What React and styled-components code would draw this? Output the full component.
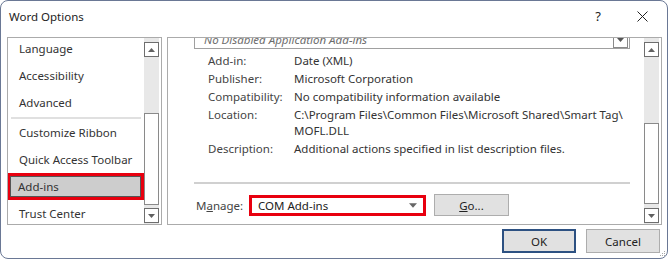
import React from "react";
import styled, { createGlobalStyle } from "styled-components";

const Global = createGlobalStyle`
  html, body { margin: 0; padding: 0; background: #ffffff; }
  body { font-family: "Noto Sans", "Open Sans", "DejaVu Sans", sans-serif; }
  * { box-sizing: border-box; }
`;

const Window = styled.div`
  position: relative;
  width: 668px;
  height: 259px;
  border: 1px solid #6a7895;
  border-radius: 8px;
  background: #ffffff;
  display: flex;
  flex-direction: column;
  overflow: hidden;
  color: #333333;
  font-size: 11.5px;
`;

const TitleBar = styled.div`
  height: 36px;
  display: flex;
  align-items: center;
  padding: 0 3px 6px 8px;
`;

const Title = styled.div`
  flex: 1;
  font-size: 11.5px;
  color: #222222;
`;

const CaptionButton = styled.div`
  width: 44px;
  height: 24px;
  display: flex;
  align-items: center;
  justify-content: center;
  font-size: 13px;
  color: #222222;
`;

const Body = styled.div`
  height: 188px;
  display: flex;
  gap: 5px;
  padding: 0 5px 0 6px;
`;

const Panel = styled.div`
  width: ${(p) => p.$width}px;
  height: 188px;
  border: 1px solid #ababab;
  display: flex;
  overflow: hidden;
`;

const NavList = styled.div`
  flex: 1;
  overflow: hidden;
  display: flex;
  flex-direction: column;
`;

const NavInner = styled.div`
  margin-top: -3px;
  display: flex;
  flex-direction: column;
`;

const NavItem = styled.div`
  height: 27px;
  flex-shrink: 0;
  display: flex;
  align-items: center;
  white-space: nowrap;
  padding-left: ${(p) => (p.$selected ? "8px" : "11px")};
  font-size: 11.5px;
  color: #333333;
  ${(p) =>
    p.$selected &&
    `
    background: #cdcdcd;
    border: 3px solid #e8000f;
    box-shadow: inset 0 0 0 1px #555555;
    margin-left: -1px;
  `}
`;

const NavSeparator = styled.div`
  height: 3px;
  flex-shrink: 0;
  display: flex;
  align-items: center;
  padding: 0 3px;
  &::after {
    content: "";
    flex: 1;
    height: 2px;
    background: #e0e0e0;
  }
`;

const ScrollBar = styled.div`
  width: 15px;
  margin-right: 2px;
  background: #e8e8e8;
  display: flex;
  flex-direction: column;
  padding: 4px 0 1px;
  flex-shrink: 0;
`;

const ArrowButton = styled.div`
  width: 15px;
  height: 15px;
  flex-shrink: 0;
  border: 1px solid #6e6e6e;
  background: #ffffff;
  display: flex;
  align-items: center;
  justify-content: center;
`;

const Track = styled.div`
  flex: 1;
  display: flex;
  flex-direction: column;
`;

const Thumb = styled.div`
  margin-top: ${(p) => p.$top}px;
  height: ${(p) => p.$height}px;
  background: #ffffff;
  border: 1px solid #8a8a8a;
`;

const Content = styled.div`
  flex: 1;
  min-width: 0;
  padding: 0 14px 0 26px;
  display: flex;
  flex-direction: column;
  overflow: hidden;
`;

const ListBox = styled.div`
  margin-top: -9px;
  height: 20px;
  flex-shrink: 0;
  border: 1px solid #a0a0a0;
  display: flex;
  align-items: center;
  padding: 0 1px 0 9px;
`;

const ListBoxText = styled.div`
  flex: 1;
  font-style: italic;
  color: #6d6d6d;
`;

const SmallDrop = styled.div`
  width: 15px;
  height: 16px;
  border: 1px solid #8a8a8a;
  display: flex;
  align-items: center;
  justify-content: center;
  margin-top: 1px;
`;

const Details = styled.div`
  margin-top: 4px;
  padding-left: 14px;
  display: grid;
  grid-template-columns: 86px 1fr;
  row-gap: 2px;
  line-height: 16px;
  white-space: nowrap;
`;

const Label = styled.div`
  color: #444444;
`;

const Value = styled.div`
  color: #333333;
`;

const Rule = styled.div`
  margin-top: 25px;
  height: 2px;
  flex-shrink: 0;
  background: #d0d0d0;
`;

const ManageRow = styled.div`
  margin-top: 10px;
  height: 22px;
  flex-shrink: 0;
  display: flex;
  align-items: center;
  padding-left: 2px;
  white-space: nowrap;
`;

const ManageLabel = styled.div`
  width: 53px;
  color: #444444;
`;

const Combo = styled.div`
  width: 177px;
  height: 21px;
  margin-top: 1px;
  border: 3px solid #e8000f;
  background: #ffffff;
  display: flex;
  align-items: center;
  padding: 0 6px 0 6px;
`;

const ComboText = styled.div`
  flex: 1;
  color: #222222;
`;

const Button = styled.div`
  width: 74px;
  height: 24px;
  background: #e1e1e1;
  border: ${(p) => (p.$default ? "2px solid #2d5182" : "1px solid #adadad")};
  display: flex;
  align-items: center;
  justify-content: center;
  color: #222222;
`;

const GoButton = styled(Button)`
  margin-left: 8px;
  width: 75px;
  height: 22px;
`;

const Footer = styled.div`
  flex: 1;
  display: flex;
  justify-content: flex-end;
  align-items: flex-start;
  gap: 10px;
  padding: 4px 7px 0 0;
`;

const Grip = styled.svg`
  position: absolute;
  right: 1px;
  bottom: 1px;
`;

const U = styled.span`
  text-decoration: underline;
`;

const UpTri = () => (
  <svg width="7" height="4" viewBox="0 0 7 4">
    <path d="M0 4 L3.5 0 L7 4 Z" fill="#606060" />
  </svg>
);
const DownTri = ({ color = "#606060", w = 7, h = 4 }) => (
  <svg width={w} height={h} viewBox="0 0 7 4">
    <path d="M0 0 L7 0 L3.5 4 Z" fill={color} />
  </svg>
);

const VScroll = ({ top, height }) => (
  <ScrollBar>
    <ArrowButton>
      <UpTri />
    </ArrowButton>
    <Track>
      <Thumb $top={top} $height={height} />
    </Track>
    <ArrowButton>
      <DownTri />
    </ArrowButton>
  </ScrollBar>
);

export default function App() {
  return (
    <>
      <Global />
      <Window>
        <TitleBar>
          <Title>Word Options</Title>
          <CaptionButton>?</CaptionButton>
          <CaptionButton>
            <svg width="11" height="11" viewBox="0 0 11 11">
              <path d="M0.5 0.5 L10.5 10.5 M10.5 0.5 L0.5 10.5" stroke="#222" strokeWidth="1" />
            </svg>
          </CaptionButton>
        </TitleBar>
        <Body>
          <Panel $width={155}>
            <NavList>
              <NavInner>
                <NavItem>Language</NavItem>
                <NavItem>Accessibility</NavItem>
                <NavItem>Advanced</NavItem>
                <NavSeparator />
                <NavItem>Customize Ribbon</NavItem>
                <NavItem>Quick Access Toolbar</NavItem>
                <NavItem $selected>Add-ins</NavItem>
                <NavItem>Trust Center</NavItem>
              </NavInner>
            </NavList>
            <VScroll top={56} height={92} />
          </Panel>
          <Panel $width={495}>
            <Content>
              <ListBox>
                <ListBoxText>No Disabled Application Add-ins</ListBoxText>
                <SmallDrop>
                  <DownTri color="#555" />
                </SmallDrop>
              </ListBox>
              <Details>
                <Label>Add-in:</Label>
                <Value>Date (XML)</Value>
                <Label>Publisher:</Label>
                <Value>Microsoft Corporation</Value>
                <Label>Compatibility:</Label>
                <Value>No compatibility information available</Value>
                <Label>Location:</Label>
                <Value>
                  C:\Program Files\Common Files\Microsoft Shared\Smart Tag\
                  <br />
                  MOFL.DLL
                </Value>
                <Label>Description:</Label>
                <Value>Additional actions specified in list description files.</Value>
              </Details>
              <Rule />
              <ManageRow>
                <ManageLabel>
                  M<U>a</U>nage:
                </ManageLabel>
                <Combo>
                  <ComboText>COM Add-ins</ComboText>
                  <DownTri color="#666" w={8} h={5} />
                </Combo>
                <GoButton>
                  <span>
                    <U>G</U>o...
                  </span>
                </GoButton>
              </ManageRow>
            </Content>
            <VScroll top={66} height={81} />
          </Panel>
        </Body>
        <Footer>
          <Button $default>OK</Button>
          <Button>Cancel</Button>
        </Footer>
        <Grip width="7" height="7" viewBox="0 0 7 7">
          <g fill="#a8a8a8">
            <rect x="5" y="1" width="1" height="1" />
            <rect x="3" y="3" width="1" height="1" />
            <rect x="5" y="3" width="1" height="1" />
            <rect x="1" y="5" width="1" height="1" />
            <rect x="3" y="5" width="1" height="1" />
            <rect x="5" y="5" width="1" height="1" />
          </g>
        </Grip>
      </Window>
    </>
  );
}
